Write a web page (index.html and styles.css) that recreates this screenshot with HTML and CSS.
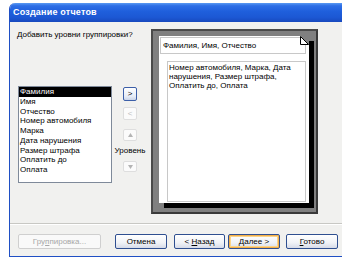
FILE: index.html
```html
<!DOCTYPE html>
<html lang="ru">
<head>
<meta charset="utf-8">
<title>Создание отчетов</title>
<link rel="stylesheet" href="styles.css">
</head>
<body>
<div class="window">
  <div class="titlebar">Создание отчетов</div>
  <div class="content">
    <div class="main">
      <div class="left">
        <div class="prompt">Добавить уровни группировки?</div>
        <div class="list-row">
          <ul class="list">
            <li class="selected">Фамилия</li>
            <li>Имя</li>
            <li>Отчество</li>
            <li>Номер автомобиля</li>
            <li>Марка</li>
            <li>Дата нарушения</li>
            <li>Размер штрафа</li>
            <li>Оплатить до</li>
            <li>Оплата</li>
          </ul>
          <div class="side">
            <button class="sq active">&gt;</button>
            <button class="sq off lt">&lt;</button>
            <button class="sq off up"><svg width="5" height="4" viewBox="0 0 5 4"><path d="M2.5 0 L5 4 L0 4 Z" fill="#b4b4b4"/></svg></button>
            <div class="level">Уровень</div>
            <button class="sq off down"><svg width="5" height="4" viewBox="0 0 5 4"><path d="M0 0 L5 0 L2.5 4 Z" fill="#b4b4b4"/></svg></button>
          </div>
        </div>
      </div>
      <div class="preview">
        <div class="page">
          <div class="group-box">Фамилия, Имя, Отчество</div>
          <div class="detail-box">Номер автомобиля, Марка, Дата<br>нарушения, Размер штрафа,<br>Оплатить до, Оплата</div>
          <svg class="fold" width="9" height="9" viewBox="0 0 9 9"><path d="M0 0 H9 V9 Z" fill="#808080"/><path d="M0.5 0.5 L8.5 8.5 H0.5 Z" fill="#fff" stroke="#000" stroke-width="1"/></svg>
        </div>
      </div>
    </div>
    <div class="separator"></div>
    <div class="buttons">
      <button class="btn off wide">Гру<u>п</u>пировка...</button>
      <button class="btn cancel">Отмена</button>
      <button class="btn back">&lt; <u>Н</u>азад</button>
      <button class="btn next default"><u>Д</u>алее &gt;</button>
      <button class="btn finish"><u>Г</u>отово</button>
    </div>
  </div>
</div>
</body>
</html>
```
FILE: styles.css
```css
html, body {
  margin: 0;
  padding: 0;
  background: #ffffff;
}
body {
  font-family: "Liberation Sans", Arial, sans-serif;
  font-size: 8px;
  color: #000;
  width: 342px;
  height: 257px;
  overflow: hidden;
}
.window {
  margin: 3px 0 0 9px;
  width: 340px;
  height: 254px;
  box-sizing: border-box;
  background: #f1f1ef;
  border-left: 1px solid #1f4fc4;
  border-bottom: 1px solid #1f4fc4;
  border-top-left-radius: 6px;
  overflow: hidden;
  display: flex;
  flex-direction: column;
}
.titlebar {
  height: 19px;
  flex: none;
  background: linear-gradient(#5a9af2 0%, #2d6ee6 15%, #1f5fdc 45%, #1c58d4 75%, #1849be 100%);
  color: #fff;
  font-weight: bold;
  font-size: 9px;
  line-height: 19px;
  padding-left: 3px;
  letter-spacing: 0.2px;
}
.content {
  flex: 1;
  display: flex;
  flex-direction: column;
}
.main {
  display: flex;
  padding-top: 7px;
  height: 185px;
}
.left {
  width: 141px;
  padding-left: 7px;
  box-sizing: border-box;
}
.prompt {
  margin-top: 1px;
  line-height: 10px;
}
.list-row {
  display: flex;
  margin-top: 46px;
  margin-left: 1px;
}
.list {
  list-style: none;
  margin: 0;
  padding: 0;
  width: 94px;
  height: 97px;
  box-sizing: border-box;
  border: 1px solid #7f8a9a;
  background: #fff;
}
.list li {
  line-height: 9.75px;
  padding-left: 1px;
  white-space: nowrap;
}
.list li.selected {
  background: #000;
  color: #fff;
}
.side {
  width: 14px;
  margin-left: 11px;
  padding-top: 1px;
  display: flex;
  flex-direction: column;
  align-items: center;
}
.sq {
  width: 14px;
  height: 14px;
  padding: 0;
  font-family: "Liberation Sans", Arial, sans-serif;
  font-size: 8px;
  line-height: 12px;
  border-radius: 2px;
  display: flex;
  align-items: center;
  justify-content: center;
}
.sq.active {
  border: 1px solid #3c5fa8;
  background: linear-gradient(#ffffff, #e6ecf6 70%, #c9d4e8);
  color: #000;
}
.sq.off {
  border: 1px solid #dedede;
  background: #fbfbfb;
  color: #c0c0c0;
}
.sq.lt { margin-top: 6px; height: 13px; }
.sq.up { margin-top: 9px; height: 12px; }
.sq.down { margin-top: 5px; height: 11px; }
.level {
  margin-top: 5px;
  white-space: nowrap;
  line-height: 10px;
}
.preview {
  width: 167px;
  height: 185px;
  box-sizing: border-box;
  background: #808080;
  border-top: 2px solid #4a4a4a;
  border-left: 2px solid #4a4a4a;
  border-right: 2px solid #3a3a3a;
  border-bottom: 2px solid #3a3a3a;
  padding: 5px 0 0 6px;
}
.page {
  position: relative;
  width: 150px;
  height: 167px;
  background: #fff;
  box-shadow: 5px 5px 0 #000;
  padding: 1px;
  box-sizing: border-box;
  display: flex;
  flex-direction: column;
}
.group-box {
  height: 17px;
  box-sizing: border-box;
  border: 1px solid #c8c8c8;
  margin-right: 2px;
  padding-left: 2px;
  line-height: 15px;
  white-space: nowrap;
}
.detail-box {
  margin: 7px 2px 0 7px;
  flex: 1;
  border: 1px solid #c8c8c8;
  padding: 1px 0 0 1px;
  line-height: 9px;
  white-space: nowrap;
}
.fold {
  position: absolute;
  top: 0;
  right: 0;
}
.separator {
  margin: 9px 4px 0 0;
  height: 0;
  border-top: 1px solid #c8c8c4;
  border-bottom: 1px solid #ffffff;
}
.buttons {
  display: flex;
  margin-top: 9px;
  padding-left: 8px;
}
.btn {
  height: 15px;
  width: 52px;
  padding: 0;
  box-sizing: border-box;
  font-family: "Liberation Sans", Arial, sans-serif;
  font-size: 8px;
  border-radius: 2px;
  border: 1px solid #2f4f90;
  background: linear-gradient(#ffffff, #f0f2f6 60%, #d6dbe8);
  color: #000;
}
.btn.wide {
  width: 83px;
}
.btn.off {
  border: 1px solid #cfcfcf;
  background: #f9f9f9;
  color: #a8a8a8;
}
.btn.cancel { margin-left: 14px; }
.btn.back { margin-left: 7px; width: 51px; }
.btn.next { margin-left: 3px; }
.btn.finish { margin-left: 6px; }
.btn.default {
  box-shadow: inset 0 0 0 1px #f4b04a, inset 0 0 0 2px #fbd58c;
}
u {
  text-decoration: underline;
}
```
